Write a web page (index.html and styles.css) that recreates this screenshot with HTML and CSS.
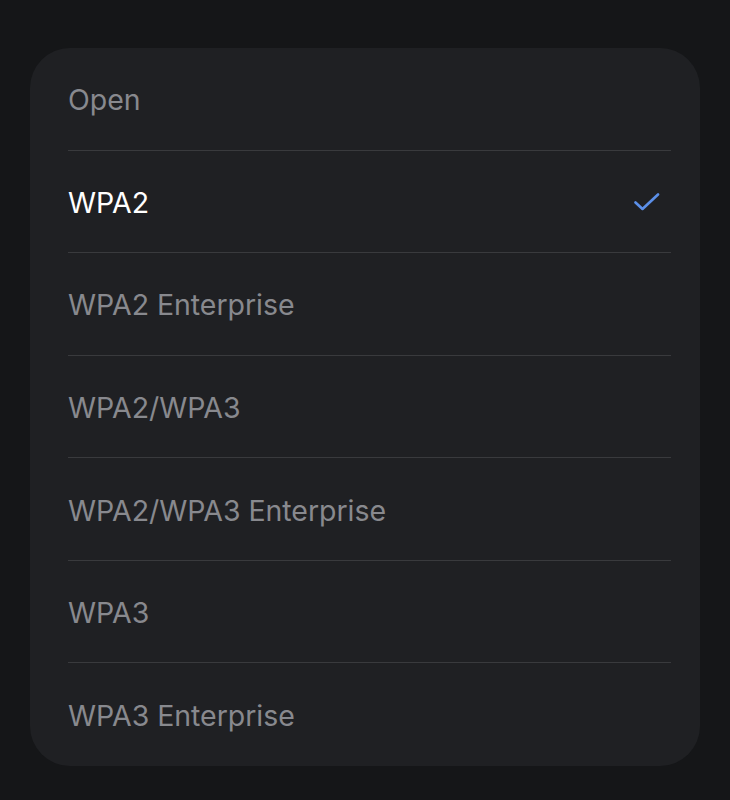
FILE: index.html
```html
<!DOCTYPE html>
<html lang="en">
<head>
  <meta charset="UTF-8" />
  <meta name="viewport" content="width=device-width, initial-scale=1.0"/>
  <title>Security</title>
  <link rel="stylesheet" href="styles.css">
</head>
<body>
  <div class="card">
    <div class="row">Open</div>
    <div class="row selected">
      <span>WPA2</span>
      <svg class="check" width="26" height="20" viewBox="0 0 26 20">
        <path d="M1.5 10.5 L8.5 17 L24 2.5" fill="none" stroke="#5b8fe8" stroke-width="2.6" stroke-linecap="round" stroke-linejoin="round"/>
      </svg>
    </div>
    <div class="row">WPA2 Enterprise</div>
    <div class="row">WPA2/WPA3</div>
    <div class="row">WPA2/WPA3 Enterprise</div>
    <div class="row">WPA3</div>
    <div class="row">WPA3 Enterprise</div>
  </div>
</body>
</html>
```

FILE: styles.css
```css
body {
  margin: 0;
  background-color: #151618;
  font-family: Inter, "Noto Sans", sans-serif;
  padding: 48px 30px 0;
}

.card {
  background-color: #1f2023;
  border-radius: 40px;
  padding: 0 29px 0 38px;
}

.row {
  height: 102.57px;
  box-sizing: border-box;
  display: flex;
  align-items: center;
  justify-content: space-between;
  padding-top: 2px;
  border-bottom: 1.5px solid #393a3d;
  color: #88898e;
  font-size: 28.5px;
  letter-spacing: -0.05px;
}

.row:last-child {
  border-bottom: none;
}

.row.selected {
  color: #fff;
}

.check {
  margin-right: 11px;
}
```
